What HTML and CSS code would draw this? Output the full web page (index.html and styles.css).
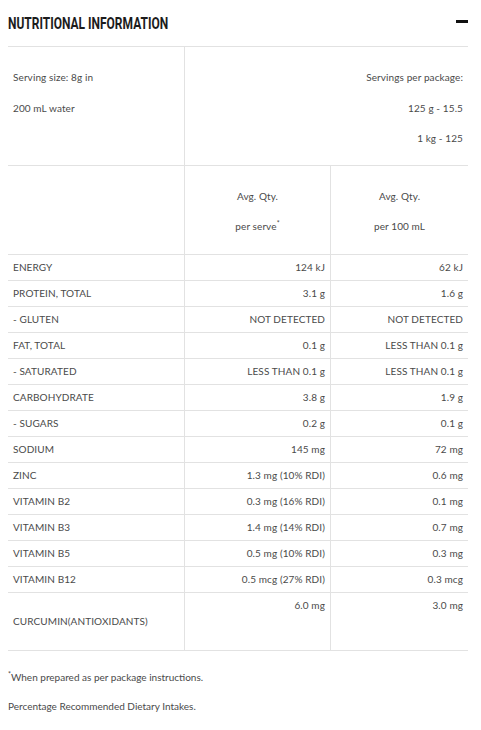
FILE: index.html
```html
<!DOCTYPE html>
<html lang="en">
<head>
<meta charset="utf-8">
<title>Nutritional Information</title>
<link rel="stylesheet" href="styles.css">
</head>
<body>
<section class="panel">
  <header class="panel-head">
    <h2 class="panel-title"><span>NUTRITIONAL INFORMATION</span></h2>
    <span class="collapse-icon" aria-label="Collapse"></span>
  </header>
  <table class="nutri">
    <colgroup>
      <col class="col-label">
      <col class="col-serve">
      <col class="col-100">
    </colgroup>
    <tr class="row-serving">
      <td class="cell-left"><p>Serving size: 8g in</p><p>200 mL water</p></td>
      <td class="cell-right last" colspan="2"><p>Servings per package:</p><p>125 g - 15.5</p><p>1 kg - 125</p></td>
    </tr>
    <tr class="row-head">
      <td></td>
      <td class="cell-center"><p>Avg. Qty.</p><p>per serve<sup>*</sup></p></td>
      <td class="cell-center last"><p>Avg. Qty.</p><p>per 100 mL</p></td>
    </tr>
    <tr class="row-data"><td>ENERGY</td><td class="val">124 kJ</td><td class="val last">62 kJ</td></tr>
    <tr class="row-data"><td>PROTEIN, TOTAL</td><td class="val">3.1 g</td><td class="val last">1.6 g</td></tr>
    <tr class="row-data"><td>- GLUTEN</td><td class="val">NOT DETECTED</td><td class="val last">NOT DETECTED</td></tr>
    <tr class="row-data"><td>FAT, TOTAL</td><td class="val">0.1 g</td><td class="val last">LESS THAN 0.1 g</td></tr>
    <tr class="row-data"><td>- SATURATED</td><td class="val">LESS THAN 0.1 g</td><td class="val last">LESS THAN 0.1 g</td></tr>
    <tr class="row-data"><td>CARBOHYDRATE</td><td class="val">3.8 g</td><td class="val last">1.9 g</td></tr>
    <tr class="row-data"><td>- SUGARS</td><td class="val">0.2 g</td><td class="val last">0.1 g</td></tr>
    <tr class="row-data"><td>SODIUM</td><td class="val">145 mg</td><td class="val last">72 mg</td></tr>
    <tr class="row-data"><td>ZINC</td><td class="val">1.3 mg (10% RDI)</td><td class="val last">0.6 mg</td></tr>
    <tr class="row-data"><td>VITAMIN B2</td><td class="val">0.3 mg (16% RDI)</td><td class="val last">0.1 mg</td></tr>
    <tr class="row-data"><td>VITAMIN B3</td><td class="val">1.4 mg (14% RDI)</td><td class="val last">0.7 mg</td></tr>
    <tr class="row-data"><td>VITAMIN B5</td><td class="val">0.5 mg (10% RDI)</td><td class="val last">0.3 mg</td></tr>
    <tr class="row-data"><td>VITAMIN B12</td><td class="val">0.5 mcg (27% RDI)</td><td class="val last">0.3 mcg</td></tr>
    <tr class="row-data row-tall"><td class="mid">CURCUMIN(ANTIOXIDANTS)</td><td class="val top">6.0 mg</td><td class="val top last">3.0 mg</td></tr>
  </table>
  <div class="notes">
    <p><sup>*</sup>When prepared as per package instructions.</p>
    <p>Percentage Recommended Dietary Intakes.</p>
  </div>
</section>
</body>
</html>
```

FILE: styles.css
```css
html, body {
  margin: 0;
  padding: 0;
  background: #ffffff;
}

body {
  font-family: Lato, "Open Sans", sans-serif;
  color: #4a4a4a;
}

.panel {
  width: 460px;
  margin-left: 8px;
}

.panel-head {
  height: 46px;
  display: flex;
  align-items: center;
  justify-content: space-between;
}

.panel-title {
  margin: 0;
  font-family: Roboto, "Liberation Sans", sans-serif;
  font-weight: 700;
  font-size: 17px;
  line-height: 20px;
  color: #1c1c1c;
  white-space: nowrap;
}

.panel-title span {
  display: inline-block;
  transform: scaleX(0.705);
  transform-origin: left center;
}

.collapse-icon {
  width: 12px;
  height: 3px;
  background: #111111;
  margin-top: -3px;
}

.nutri {
  width: 460px;
  table-layout: fixed;
  border-collapse: separate;
  border-spacing: 0;
  border-top: 1px solid #e2e2e2;
  font-size: 10px;
  letter-spacing: 0.1px;
}

.col-label { width: 177px; }
.col-serve { width: 146px; }
.col-100 { width: 137px; }

.nutri td {
  border-right: 1px solid #e2e2e2;
  border-bottom: 1px solid #e2e2e2;
  padding: 0 5px;
  vertical-align: top;
}

.nutri td.last {
  border-right: none;
}

.nutri p {
  margin: 0;
  line-height: 30.5px;
}

.row-serving td {
  padding-top: 15px;
  padding-bottom: 11px;
}

.row-head td {
  padding-top: 15px;
  padding-bottom: 12px;
}

.cell-right { text-align: right; }
.cell-center { text-align: center; }

.row-data td {
  height: 25px;
  line-height: 25px;
  vertical-align: middle;
  white-space: nowrap;
}

.row-data td.val {
  text-align: right;
}

.row-tall td {
  height: 57px;
}

.row-tall td.top {
  vertical-align: top;
}

.row-tall td.mid {
  vertical-align: middle;
}

sup {
  font-size: 7px;
  line-height: 0;
  vertical-align: 4px;
}

.notes {
  padding-top: 12px;
  font-size: 10px;
}

.notes p {
  margin: 0;
  line-height: 29px;
}
```
